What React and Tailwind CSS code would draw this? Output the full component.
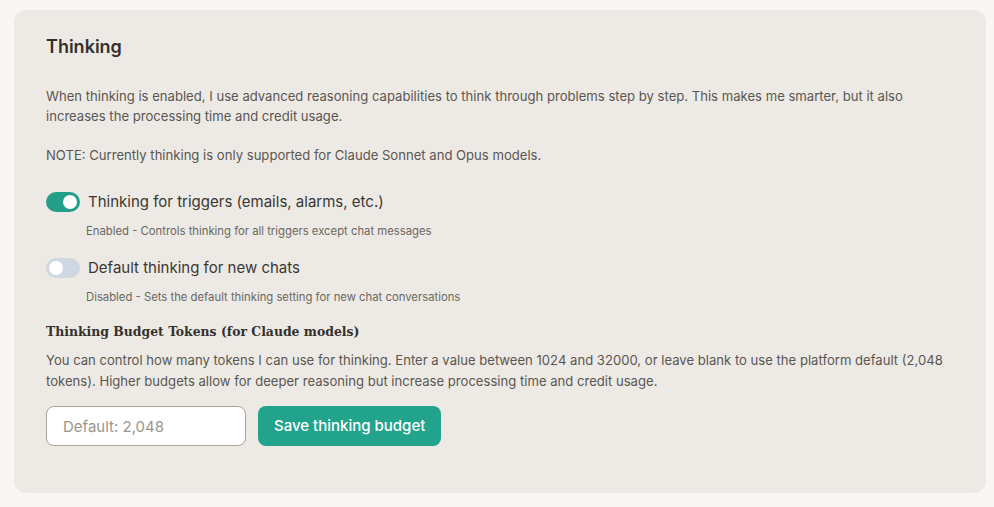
import { useState } from "react";

const Toggle = ({ on, onClick }) => (
  <button
    onClick={onClick}
    className={`relative h-[20px] w-[34px] shrink-0 rounded-full transition-colors ${
      on ? "bg-[#229f89]" : "bg-[#cfd8e2]"
    }`}
  >
    <span
      className={`absolute top-[3px] h-[14px] w-[14px] rounded-full bg-white transition-all ${
        on ? "left-[17px]" : "left-[3px]"
      }`}
    />
  </button>
);

export default function App() {
  const [triggers, setTriggers] = useState(true);
  const [chats, setChats] = useState(false);

  return (
    <div className="min-h-screen bg-[#f8f7f3] pl-[14px] pr-[8px] pt-[10px] font-['Inter',sans-serif] text-[#3d3a35]">
      <div className="h-[483px] rounded-[12px] bg-[#edeae5] px-[32px] pt-[25px]">
        <h2 className="text-[18px] font-semibold leading-[24px] text-[#34312c]">Thinking</h2>

        <p className="mt-[27px] text-[13.1px] leading-[20px] text-[#5a5650]">
          When thinking is enabled, I use advanced reasoning capabilities to think through problems step by step. This
          makes me smarter, but it also increases the processing time and credit usage.
        </p>
        <p className="mt-[19px] text-[13.1px] leading-[20px] text-[#5a5650]">
          NOTE: Currently thinking is only supported for Claude Sonnet and Opus models.
        </p>

        <div className="mt-[26px] flex items-center gap-[8px]">
          <Toggle on={triggers} onClick={() => setTriggers(!triggers)} />
          <span className="text-[15px] leading-[22px] text-[#3a3732]">Thinking for triggers (emails, alarms, etc.)</span>
        </div>
        <p className="mt-[10px] pl-[40px] text-[11.3px] leading-[16px] text-[#6b675f]">
          Enabled - Controls thinking for all triggers except chat messages
        </p>

        <div className="mt-[18px] flex items-center gap-[8px]">
          <Toggle on={chats} onClick={() => setChats(!chats)} />
          <span className="text-[15px] leading-[22px] text-[#3a3732]">Default thinking for new chats</span>
        </div>
        <p className="mt-[10px] pl-[40px] text-[11.3px] leading-[16px] text-[#6b675f]">
          Disabled - Sets the default thinking setting for new chat conversations
        </p>

        <h3 className="mt-[16px] font-['DejaVu_Serif_Condensed','DejaVu_Serif',serif] text-[13.8px] font-bold leading-[20px] text-[#34312c]">
          Thinking Budget Tokens (for Claude models)
        </h3>
        <p className="mt-[9px] text-[13.1px] leading-[21px] text-[#5a5650]">
          You can control how many tokens I can use for thinking. Enter a value between 1024 and 32000, or leave blank to
          use the platform default (2,048 tokens). Higher budgets allow for deeper reasoning but increase processing time
          and credit usage.
        </p>

        <div className="mt-[14px] flex gap-[12px]">
          <input
            type="number"
            placeholder="Default: 2,048"
            className="h-[40px] w-[200px] rounded-[8px] border border-[#a8a298] bg-white px-[16px] text-[15px] text-[#3a3732] outline-none placeholder:text-[#9a958d]"
          />
          <button className="h-[40px] rounded-[8px] bg-[#22a38b] px-[16px] text-[15px] font-medium text-white">
            Save thinking budget
          </button>
        </div>
      </div>
    </div>
  );
}
